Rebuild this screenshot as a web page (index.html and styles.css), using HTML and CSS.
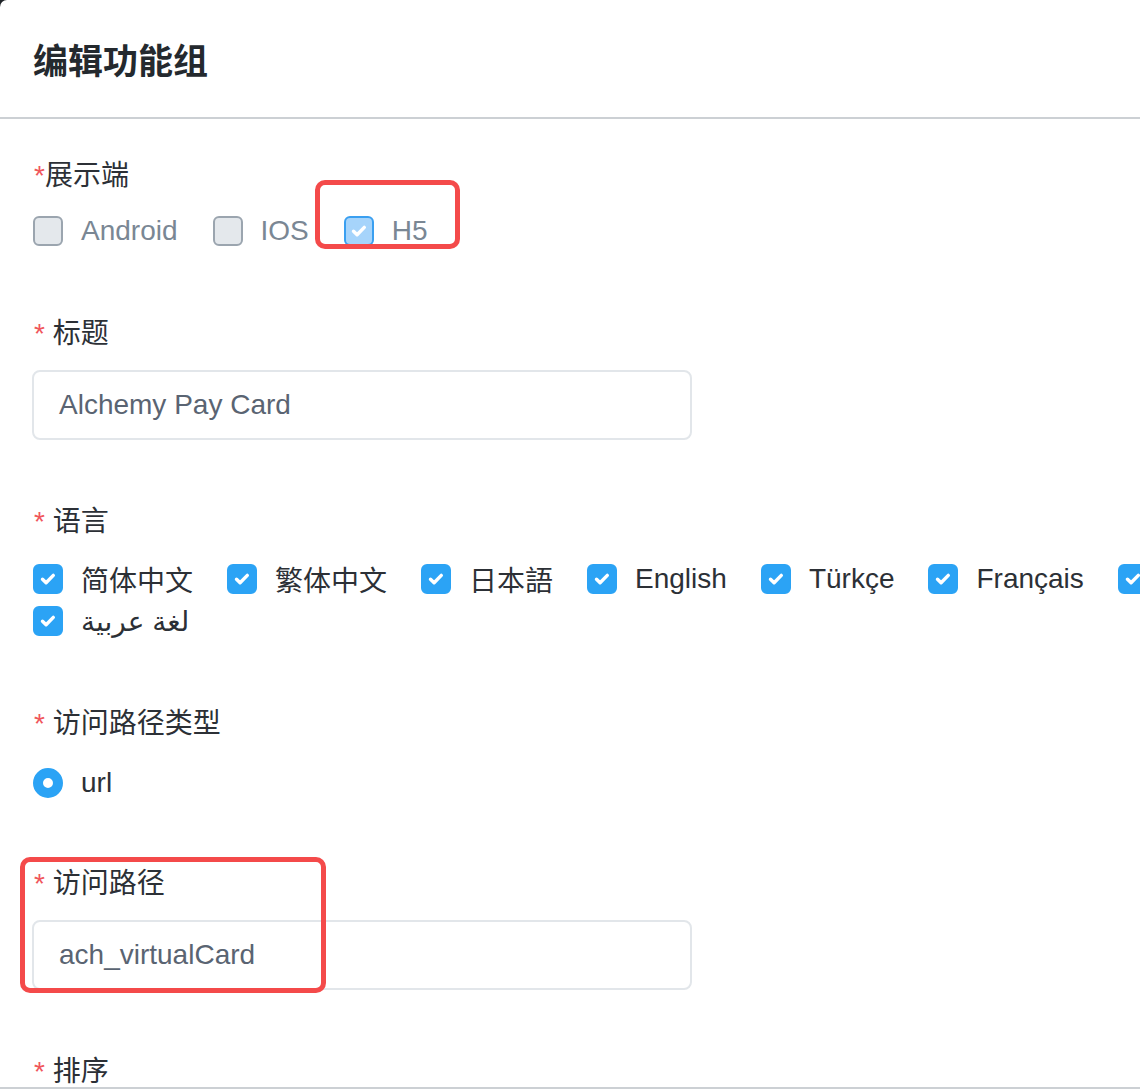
FILE: index.html
```html
<!DOCTYPE html>
<html lang="zh-cn">
	<head>
		<meta http-equiv="Content-Type" content="text/html; charset=utf-8" />
		<title>编辑功能组</title>
		<link rel="stylesheet" href="styles.css">
	</head>

	<body>
		<div class="modal">
			<div class="modal-hd">编辑功能组</div>

			<div class="modal-bd">
				<div class="form-item">
					<div class="form-label"><i>*</i>展示端</div>
					<div class="check-group is-disabled">
						<label class="check"><span class="box"></span>Android</label>
						<label class="check"><span class="box"></span>IOS</label>
						<label class="check on"><span class="box"><svg viewBox="0 0 30 30"><path d="M9.5 15.2l3.6 3.6 7.2-7.4"/></svg></span>H5</label>
					</div>
				</div>

				<div class="form-item">
					<div class="form-label"><i>*</i> 标题</div>
					<div class="input">Alchemy Pay Card</div>
				</div>

				<div class="form-item">
					<div class="form-label"><i>*</i> 语言</div>
					<div class="check-group langs">
						<label class="check on"><span class="box"><svg viewBox="0 0 30 30"><path d="M9.5 15.2l3.6 3.6 7.2-7.4"/></svg></span>简体中文</label>
						<label class="check on"><span class="box"><svg viewBox="0 0 30 30"><path d="M9.5 15.2l3.6 3.6 7.2-7.4"/></svg></span>繁体中文</label>
						<label class="check on"><span class="box"><svg viewBox="0 0 30 30"><path d="M9.5 15.2l3.6 3.6 7.2-7.4"/></svg></span>日本語</label>
						<label class="check on"><span class="box"><svg viewBox="0 0 30 30"><path d="M9.5 15.2l3.6 3.6 7.2-7.4"/></svg></span>English</label>
						<label class="check on"><span class="box"><svg viewBox="0 0 30 30"><path d="M9.5 15.2l3.6 3.6 7.2-7.4"/></svg></span>Türkçe</label>
						<label class="check on"><span class="box"><svg viewBox="0 0 30 30"><path d="M9.5 15.2l3.6 3.6 7.2-7.4"/></svg></span>Français</label>
						<label class="check on"><span class="box"><svg viewBox="0 0 30 30"><path d="M9.5 15.2l3.6 3.6 7.2-7.4"/></svg></span>Español</label>
						<label class="check on"><span class="box"><svg viewBox="0 0 30 30"><path d="M9.5 15.2l3.6 3.6 7.2-7.4"/></svg></span><span dir="rtl">لغة عربية</span></label>
					</div>
				</div>

				<div class="form-item radio-item">
					<div class="form-label"><i>*</i> 访问路径类型</div>
					<div class="radio-group">
						<label class="radio"><span class="dot"></span>url</label>
					</div>
				</div>

				<div class="form-item">
					<div class="form-label"><i>*</i> 访问路径</div>
					<div class="input">ach_virtualCard</div>
				</div>

				<div class="form-item">
					<div class="form-label"><i>*</i> 排序</div>
				</div>
			</div>

			<div class="modal-ft"></div>

			<!-- 标注框 -->
			<div class="mark mark-h5"></div>
			<div class="mark mark-path"></div>
		</div>
	</body>
</html>
```

FILE: styles.css
```css
html,body{
	margin:0;
	padding:0;
	overflow:hidden;
}
body{
	background:#1f2328;
	font-family:"Liberation Sans","Noto Sans CJK SC","DejaVu Sans",sans-serif;
	color:#2c3036;
}
.modal{
	position:relative;
	width:1400px;
	height:1090px;
	background:#fff;
	border-top-left-radius:7px;
	display:flex;
	flex-direction:column;
	overflow:hidden;
}
.modal-hd{
	height:117px;
	line-height:124px;
	padding-left:33px;
	font-size:35px;
	font-weight:bold;
	color:#24292e;
	border-bottom:2px solid #ccd0d4;
	flex:none;
}
.modal-bd{
	flex:1;
	overflow:hidden;
	padding:37px 0 0 33px;
}
.modal-ft{
	flex:none;
	height:1px;
	border-top:2px solid #ccd0d4;
}

.form-item{
	margin-bottom:62px;
}
.form-item.radio-item{
	margin-bottom:60px;
}
.form-label{
	height:40px;
	line-height:40px;
	font-size:28px;
	margin-bottom:16px;
	padding-left:1px;
}
.form-label i{
	font-style:normal;
	color:#f0565b;
}
.form-item:first-child .form-label{
	margin-bottom:14px;
}

/* checkbox */
.check-group{
	display:flex;
	flex-wrap:wrap;
	width:1310px;
}
.check{
	display:flex;
	align-items:center;
	height:42px;
	font-size:28px;
	margin-right:34px;
	white-space:nowrap;
}
.check .box{
	width:30px;
	height:30px;
	box-sizing:border-box;
	border-radius:6px;
	margin-right:18px;
	flex:none;
	background:#2ba3f5;
	border:2px solid #2ba3f5;
	display:flex;
	align-items:center;
	justify-content:center;
}
.check .box svg{
	width:30px;
	height:30px;
	flex:none;
}
.check .box path{
	fill:none;
	stroke:#fff;
	stroke-width:3.4;
	stroke-linecap:round;
	stroke-linejoin:round;
}
.is-disabled .check{
	color:#7a8794;
	margin-right:35px;
}
.is-disabled .check .box{
	background:#e4e8ec;
	border-color:#9ba5af;
}
.is-disabled .check.on .box{
	background:#a6d4fb;
	border-color:#3a9ff0;
}

/* radio */
.radio-group{
	display:flex;
	padding-top:2px;
}
.radio{
	display:flex;
	align-items:center;
	height:42px;
	font-size:28px;
}
.radio .dot{
	width:30px;
	height:30px;
	box-sizing:border-box;
	border-radius:50%;
	border:10px solid #2ba3f5;
	background:#fff;
	margin-right:18px;
}

/* input */
.input{
	width:631px;
	height:66px;
	line-height:66px;
	border:2px solid #e2e6ea;
	border-radius:8px;
	padding-left:25px;
	margin-left:-1px;
	font-size:28px;
	color:#5a6472;
}

/* 标注框 */
.mark{
	position:absolute;
	border:5px solid #f44a4a;
	border-radius:10px;
	box-sizing:border-box;
}
.mark-h5{
	left:315px;
	top:180px;
	width:145px;
	height:69px;
}
.mark-path{
	left:20px;
	top:857px;
	width:306px;
	height:136px;
}
```
